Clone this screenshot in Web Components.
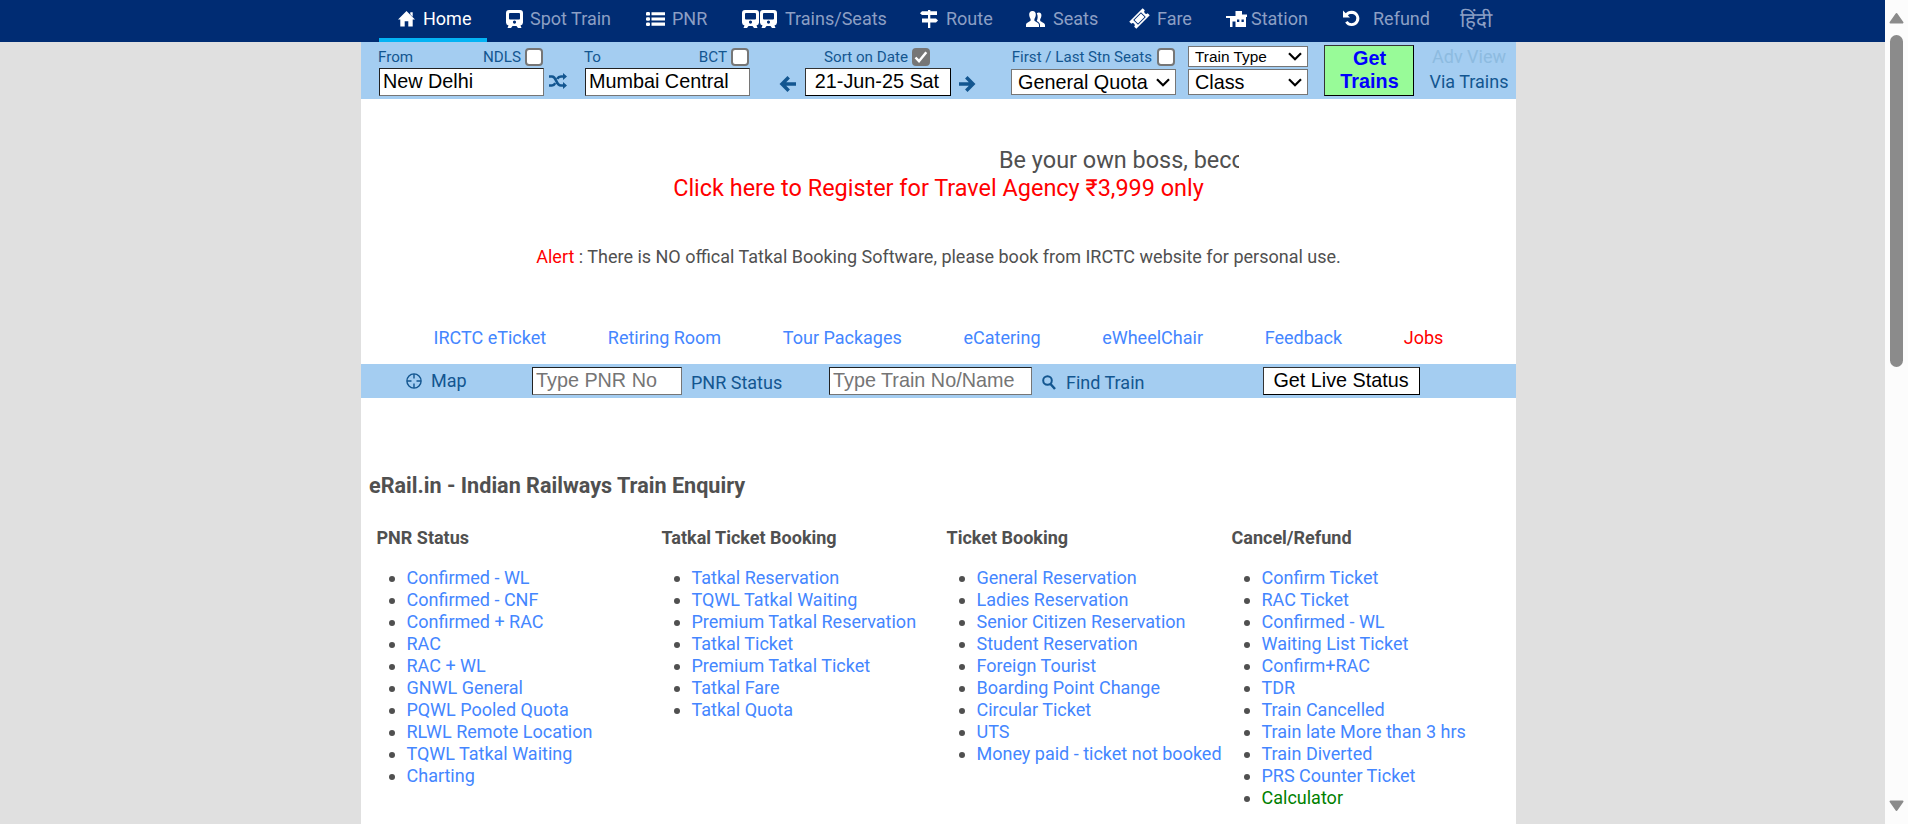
<!DOCTYPE html>
<html lang="en">
<head>
<meta charset="utf-8">
<title>eRail.in - Indian Railways Train Enquiry</title>
<style>
html,body{margin:0;height:100%;overflow:hidden;background:#e0e0e0;font-family:Roboto,"Open Sans",sans-serif;font-size:18px;color:#505050}
body{display:flex}
</style>
</head>
<body>
<erail-app></erail-app>
<page-scrollbar></page-scrollbar>
<script>
const define = (name, css, html) => customElements.define(name, class extends HTMLElement {
  constructor(){ super(); this.attachShadow({mode:'open'}); }
  connectedCallback(){
    this.shadowRoot.innerHTML = `<style>*{box-sizing:border-box}${css}</style>` + (typeof html === 'function' ? html(this) : html);
  }
});

const train = '<path fill-rule="evenodd" d="M3 0h11a3 3 0 0 1 3 3v9.500a3 3 0 0 1-2.500 2.900L15.500 18h-3.500l-1.500-2h-4l-1.500 2H1.500l1-2.600A3 3 0 0 1 0 12.500V3a3 3 0 0 1 3-3zM4 3a1 1 0 0 0-1 1v4.500a1 1 0 0 0 1 1h9a1 1 0 0 0 1-1V4a1 1 0 0 0-1-1zM8.500 10.500a1.600 1.600 0 1 0 0 3.200a1.600 1.600 0 1 0 0-3.200z"/>';
const ICONS = {
  home:[17,16,'<path d="M8.500 0 17 8.600H14.700V15.500H10.300V10.300H6.700V15.500H2.300V8.600H0L8.500 0zM12.300 1.300h2.400v4.400l-2.400-2.400z"/>'],
  train:[17,18,train],
  trains:[35,18,train+'<g transform="translate(18 0)">'+train+'</g>'],
  list:[19,14,'<rect width="4" height="3.600" rx="1.200"/><rect y="5.200" width="4" height="3.600" rx="1.200"/><rect y="10.400" width="4" height="3.600" rx="1.200"/><path d="M5.500 .2H19v3.100H5.500zM5.500 5.400H19v3.100H5.500zM5.500 10.600H19v3.100H5.500z"/>'],
  route:[18,18,'<path d="M8 0h2.300v1.300H17V5H2L0 3.200 2 1.300h6zM8 5h2.300v3.500H16L18 10.500 16 12.400H2V8.500h6zM8 12.400h2.300V18H8z"/>'],
  seats:[19,16,'<path d="M6.500 0C9 0 10 1.800 9.800 4c-.2 2-.8 3-1.400 3.900v1.700c.3 1 4.600 2 4.600 4.400V16H0v-2c0-2.400 4.300-3.400 4.600-4.400V7.900C4 7 3.400 6 3.200 4 3 1.800 4 0 6.500 0z"/><path d="M10.800 2.200c.6-.5 1.100-.7 1.900-.7 2.100 0 2.900 1.500 2.700 3.300-.2 1.600-.6 2.500-1.200 3.200v1.700c.4 1 4.800 2 4.800 4.300v2h-5v-2c0-2.100-1.400-3-3.300-4.100 1.200-2.200 1.400-5.200.1-7.700z"/>'],
  ticket:[17,17,'<g transform="rotate(-45 8.500 8.500)"><path fill-rule="evenodd" d="M-1 3.500h19v3a2 2 0 0 0 0 4v3H-1v-3a2 2 0 0 0 0-4zM3 5.100v6.800h11V5.100zM3.900 6h9.200v5H3.900z"/></g>'],
  station:[21,16,'<path fill-rule="evenodd" d="M0 5h9.500V0H16v3.500h5V6h-1v10H9.500v-5.500H6.500V16H4V7H0zM11 8.500v2.500h2.300V8.500zM15.500 8.500v2.500h2.300V8.500z"/>'],
  undo:[17,17,'<path d="M0 .5 L7 7.500H0z"/><path d="M3 5C4.600 3 6.400 2.200 8.800 2.200a6.200 6.200 0 1 1-5.400 9.500" fill="none" stroke="currentColor" stroke-width="2.900"/>'],
  shuffle:[18,16,'<path d="M0 3.500h3c2 0 3 1.400 4.300 4.500S9.800 12.500 12 12.500h2.500M0 12.500h3c1.600 0 2.500-.9 3.300-2.300M8.200 5.800C9 4.400 10 3.500 12 3.500h2.500" fill="none" stroke="currentColor" stroke-width="2.600"/><path d="M14 0l4 3.500L14 7zM14 9l4 3.500-4 3.500z"/>'],
  left:[16,16,'<path d="M8.700 1.300 2 8l6.700 6.700M2.500 8H16" fill="none" stroke="currentColor" stroke-width="3.500"/>'],
  right:[16,16,'<path d="M7.300 1.300 14 8l-6.700 6.700M13.500 8H0" fill="none" stroke="currentColor" stroke-width="3.500"/>'],
  target:[16,16,'<g fill="none" stroke="currentColor" stroke-width="1.400"><circle cx="8" cy="8" r="7.100"/><path d="M8 1v4.500M8 10.500V15M1 8h4.500M10.500 8H15"/></g>'],
  search:[14,15,'<g fill="none" stroke="currentColor"><circle cx="5.500" cy="5.500" r="4.300" stroke-width="2"/><path d="M8.500 9l4.500 5" stroke-width="2.500"/></g>'],
  chevron:[14,9,'<path d="M1 1.300l6 6 6-6" fill="none" stroke="currentColor" stroke-width="2.200"/>']
};
define('rail-icon', ':host{display:block;flex:none}svg{display:block;fill:currentColor;overflow:visible}', el => {
  const [w,h,body] = ICONS[el.getAttribute('name')];
  return `<svg width="${w}" height="${h}" viewBox="0 0 ${w} ${h}">${body}</svg>`;
});

define('nav-item', `:host{display:flex;align-items:center;color:#8c9fc4;height:42px;padding-bottom:5px;white-space:nowrap}
  rail-icon{color:#fff;margin-right:var(--gap,7px)}
  :host([active]){color:#fff;border-bottom:4px solid #03b3f4;padding:0 0 1px 19px;margin-left:-19px}`,
  el => (el.getAttribute('icon') ? `<rail-icon name="${el.getAttribute('icon')}"></rail-icon>` : '') + '<span><slot></slot></span>');

define('nav-bar', `:host{display:block;background:#002c73;height:42px}
  nav{display:grid;grid-template-columns:89px 19px 140px 96px 178px 106px 105px 95px 117px 117px 60px;width:1155px;padding-left:37px}
  .hi{font-size:20.5px}`,
  `<nav><nav-item icon="home" active style="--gap:8px">Home</nav-item><span></span>
  <nav-item icon="train">Spot Train</nav-item><nav-item icon="list" style="--gap:7px">PNR</nav-item>
  <nav-item icon="trains" style="--gap:8px">Trains/Seats</nav-item><nav-item icon="route" style="--gap:8px">Route</nav-item>
  <nav-item icon="seats" style="--gap:8px">Seats</nav-item><nav-item icon="ticket" style="--gap:9px">Fare</nav-item>
  <nav-item icon="station" style="--gap:4px">Station</nav-item><nav-item icon="undo" style="--gap:13px">Refund</nav-item>
  <nav-item class="hi">हिंदी</nav-item></nav>`);

define('check-label', `:host{display:flex;align-items:center;font-size:15.2px;height:20px;gap:4px;white-space:nowrap}
  i{width:18px;height:18px;border:2px solid #767676;border-radius:4px;background:#fff;display:block}
  :host([checked]) i{background:#767676}
  svg{display:block;margin:-2px}`,
  el => `<span><slot></slot></span><i>${el.hasAttribute('checked') ? '<svg width="18" height="18"><path d="M3.500 9.500l3.500 3.700 7.300-9" fill="none" stroke="#fff" stroke-width="2.500"/></svg>' : ''}</i>`);

define('rail-select', `:host{display:flex;align-items:center;justify-content:space-between;border:1px solid #767676;background:#fff;color:#000;font-family:"Liberation Sans",Arial,sans-serif;font-size:19.8px;height:26px;padding:0 5px 0 6px;white-space:nowrap}
  :host([small]){font-size:15.4px;height:21px}`,
  '<span><slot></slot></span><rail-icon name="chevron"></rail-icon>');

define('rail-input', `:host{display:block}
  input{display:block;width:100%;height:28px;margin:0;padding:0 4px 2px 3px;border:1px solid;border-color:#222 #767676 #767676 #222;background:#fff;color:#000;font:19.8px "Liberation Sans",Arial,sans-serif;outline:0;border-radius:0}
  input::placeholder{color:#757575}`,
  el => `<input value="${el.getAttribute('value')||''}" placeholder="${el.getAttribute('placeholder')||''}">`);

define('rail-button', `:host{display:block}
  button{display:block;width:100%;height:28px;margin:0;padding:0 1px 2px 0;border:1px solid #000;border-color:#333 #000 #000 #333;background:#fff;color:#000;font:19.8px "Liberation Sans",Arial,sans-serif;border-radius:0;white-space:nowrap}
  :host([primary]) button{height:51px;padding:0 0 2px 1px;background:#98fb98;color:#00f;font-weight:bold;line-height:23px}`,
  '<button><slot></slot></button>');

define('search-bar', `:host{display:grid;grid-template-columns:165px 41px 165px 30px 195px 36px 165px 12px 120px 16px 90px 15px 82px;background:#a4cdf1;height:57px;padding-left:18px;color:#135690;align-items:start}
  .col{display:flex;flex-direction:column}
  .top{display:flex;justify-content:space-between;align-items:center;height:20px;margin:5px 1px 1px -1px;font-size:15.2px}
  .swap{padding:31px 0 0 5px}
  .date{display:flex;justify-content:space-between;align-items:center;margin:0}
  .date rail-button{width:146px}
  .date rail-icon{padding-top:4px}
  .view{line-height:25px;padding-top:2px;text-align:center;width:80px}
  .off{color:#8dbbe0}`,
  `<div class="col"><div class="top"><span>From</span><check-label>NDLS</check-label></div><rail-input value="New Delhi"></rail-input></div>
  <div class="swap"><rail-icon name="shuffle"></rail-icon></div>
  <div class="col"><div class="top"><span>To</span><check-label>BCT</check-label></div><rail-input value="Mumbai Central"></rail-input></div>
  <span></span>
  <div class="col"><div class="top" style="justify-content:flex-start;margin-left:44px"><check-label checked>Sort on Date</check-label></div><div class="date"><rail-icon name="left"></rail-icon><rail-button>21-Jun-25 Sat</rail-button><rail-icon name="right"></rail-icon></div></div>
  <span></span>
  <div class="col"><div class="top" style="margin:5px 1px 2px;justify-content:flex-end"><check-label style="gap:5px;font-size:15.100px">First / Last Stn Seats</check-label></div><rail-select>General Quota</rail-select></div>
  <span></span>
  <div class="col" style="padding-top:4px;gap:2px"><rail-select small>Train Type</rail-select><rail-select>Class</rail-select></div>
  <span></span>
  <rail-button primary style="padding-top:3px">Get<br>Trains</rail-button>
  <span></span>
  <div class="view"><div class="off">Adv View</div><div>Via Trains</div></div>`);

define('promo-block', `:host{display:block;height:265px;text-align:center;padding-top:47px}
  .marquee{width:601px;margin:0 auto;overflow:hidden;text-align:left;white-space:nowrap;text-indent:361px;line-height:28px}
  .big{font-size:23.45px}.red{color:#f00}
  .reg{line-height:28px}
  .alert{line-height:22px;margin-top:44px}
  nav{display:flex;gap:61.700px;justify-content:center;line-height:22px;margin-top:59px;color:#4486ff}`,
  `<div class="marquee big">Be your own boss, become</div>
  <div class="reg big red">Click here to Register for Travel Agency ₹3,999 only</div>
  <div class="alert"><span class="red">Alert</span> : There is NO offical Tatkal Booking Software, please book from IRCTC website for personal use.</div>
  <nav><span>IRCTC eTicket</span><span>Retiring Room</span><span>Tour Packages</span><span>eCatering</span><span>eWheelChair</span><span>Feedback</span><span class="red">Jobs</span></nav>`);

define('status-bar', `:host{display:grid;grid-template-columns:25px 101px 150px 9px 138px 203px 10px 24px 197px 157px;background:#a4cdf1;height:34px;padding-left:45px;align-items:center;color:#135690;white-space:nowrap}
  .map{padding-bottom:2px}
  .low{padding-top:2px}`,
  `<rail-icon name="target"></rail-icon><span class="map">Map</span>
  <rail-input placeholder="Type PNR No"></rail-input><i></i><span class="low">PNR Status</span>
  <rail-input placeholder="Type Train No/Name"></rail-input><i></i>
  <rail-icon name="search" class="low"></rail-icon><span class="low">Find Train</span><rail-button>Get Live Status</rail-button>`);

define('link-column', `:host{display:block;white-space:nowrap}
  h3{margin:0 0 18px;font-size:18px;font-weight:700;line-height:22px}
  ul{margin:0;padding:0 0 0 30px;line-height:22px}
  li span{color:#4486ff} li.g span{color:#008000}`,
  el => `<h3>${el.getAttribute('heading')}</h3><ul>${el.getAttribute('items').split('|').map(t => `<li${t==='Calculator'?' class="g"':''}><span>${t}</span></li>`).join('')}</ul>`);

define('link-directory', `:host{display:block;padding:75px 0 0 8px}
  h1{margin:0 0 28px;font-size:21.600px;font-weight:700;line-height:26px}
  .cols{display:grid;grid-template-columns:repeat(4,285px);padding-left:7.500px}`,
  `<h1>eRail.in - Indian Railways Train Enquiry</h1><div class="cols">
  <link-column heading="PNR Status" items="Confirmed - WL|Confirmed - CNF|Confirmed + RAC|RAC|RAC + WL|GNWL General|PQWL Pooled Quota|RLWL Remote Location|TQWL Tatkal Waiting|Charting"></link-column>
  <link-column heading="Tatkal Ticket Booking" items="Tatkal Reservation|TQWL Tatkal Waiting|Premium Tatkal Reservation|Tatkal Ticket|Premium Tatkal Ticket|Tatkal Fare|Tatkal Quota"></link-column>
  <link-column heading="Ticket Booking" items="General Reservation|Ladies Reservation|Senior Citizen Reservation|Student Reservation|Foreign Tourist|Boarding Point Change|Circular Ticket|UTS|Money paid - ticket not booked"></link-column>
  <link-column heading="Cancel/Refund" items="Confirm Ticket|RAC Ticket|Confirmed - WL|Waiting List Ticket|Confirm+RAC|TDR|Train Cancelled|Train late More than 3 hrs|Train Diverted|PRS Counter Ticket|Calculator"></link-column></div>`);

define('erail-app', `:host{display:block;flex:1;min-width:0}
  main{width:1155px;height:782px;margin:0 0 0 361px;background:#fff;overflow:hidden}
  nav-bar{padding-left:361px}`,
  `<nav-bar></nav-bar><main><search-bar></search-bar><promo-block></promo-block><status-bar></status-bar><link-directory></link-directory></main>`);

define('page-scrollbar', `:host{display:flex;flex-direction:column;align-items:center;width:23px;height:824px;background:#fcfcfc;flex:none;box-sizing:border-box;padding:12px 0}
  div{width:13px;height:332px;border-radius:7px;background:#8b8b8b;margin:11px 0 auto}
  svg{display:block;fill:#8b8b8b;stroke:#8b8b8b;stroke-width:2;stroke-linejoin:round}`,
  `<svg width="15" height="12"><path d="M7.500 2L13.500 10.500H1.500z"/></svg><div></div><svg width="15" height="12"><path d="M7.500 10L1.500 1.500h12z"/></svg>`);
</script>
</body>
</html>
